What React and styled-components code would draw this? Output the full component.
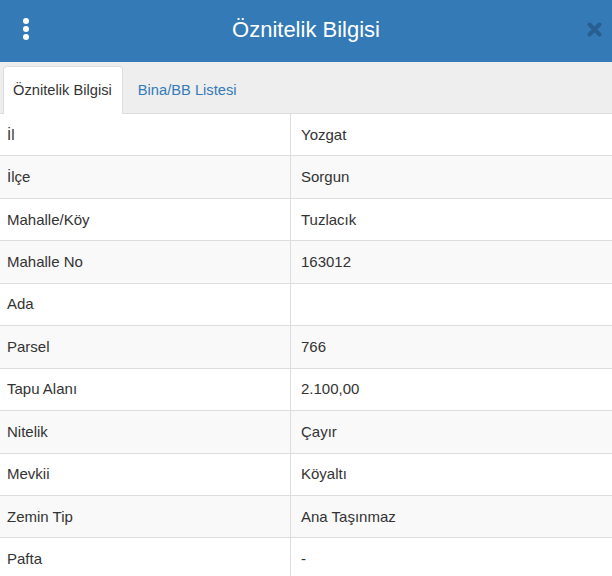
import React from 'react';
import styled, { createGlobalStyle } from 'styled-components';

const GlobalStyle = createGlobalStyle`
    body {
        margin: 0;
        background: #fff;
        font-family: "Liberation Sans", Arial, sans-serif;
        color: #333;
    }
`

const Panel = styled.div`
    width: 612px;
    height: 576px;
    overflow: hidden;
`

const Header = styled.div`
    position: relative;
    height: 62px;
    background-color: #337ab7;
    display: flex;
    align-items: center;
    justify-content: center;
`

const Title = styled.h1`
    margin: 0;
    font-size: 22px;
    font-weight: normal;
    color: #fff;
    line-height: 1;
    margin-top: -3px;
`

const MenuBtn = styled.div`
    position: absolute;
    left: 23px;
    top: 18px;
    display: flex;
    flex-direction: column;
    gap: 2px;
    & span {
        width: 6px;
        height: 6px;
        border-radius: 50%;
        background: #fff;
    }
`

const CloseBtn = styled.div`
    position: absolute;
    right: 10px;
    top: 22px;
    width: 15px;
    height: 15px;
`

const TabBar = styled.div`
    height: 52px;
    box-sizing: border-box;
    background-color: #eee;
    border-bottom: 1px solid #ddd;
    padding: 4px 0 0 3px;
    display: flex;
    align-items: flex-end;
    gap: 2px;
`

const Tab = styled.div`
    box-sizing: border-box;
    padding: ${p => p.active ? '0 10px 2px 9px' : '0 11px 2px 12px'};
    display: flex;
    align-items: center;
    font-size: 14.7px;
    margin-bottom: -1px;
    border-radius: 4px 4px 0 0;
    border: 1px solid ${p => p.active ? '#ddd' : 'transparent'};
    border-bottom: none;
    background: ${p => p.active ? '#fff' : 'transparent'};
    color: ${p => p.active ? '#333' : '#337ab7'};
    height: ${p => p.active ? '48px' : '47px'};
`

const Row = styled.div`
    display: grid;
    grid-template-columns: 290px 1fr;
    height: 42.44px;
    box-sizing: border-box;
    border-bottom: 1px solid #ddd;
    background: ${p => p.striped ? '#f9f9f9' : '#fff'};
    font-size: 15px;
`

const Cell = styled.div`
    display: flex;
    align-items: center;
    padding: 0 7px 1px;
    & + & {
        border-left: 1px solid #ddd;
        padding-left: 10px;
    }
`

const rows = [
    ['İl', 'Yozgat'],
    ['İlçe', 'Sorgun'],
    ['Mahalle/Köy', 'Tuzlacık'],
    ['Mahalle No', '163012'],
    ['Ada', ''],
    ['Parsel', '766'],
    ['Tapu Alanı', '2.100,00'],
    ['Nitelik', 'Çayır'],
    ['Mevkii', 'Köyaltı'],
    ['Zemin Tip', 'Ana Taşınmaz'],
    ['Pafta', '-'],
]

export default function App() {
    return (
        <Panel>
            <GlobalStyle />
            <Header>
                <MenuBtn><span /><span /><span /></MenuBtn>
                <Title>Öznitelik Bilgisi</Title>
                <CloseBtn>
                    <svg width="15" height="15" viewBox="0 0 15 15">
                        <path d="M2.5 2.5 L12.5 12.5 M12.5 2.5 L2.5 12.5" stroke="#285f90" strokeWidth="4" strokeLinecap="round" />
                    </svg>
                </CloseBtn>
            </Header>
            <TabBar>
                <Tab active>Öznitelik Bilgisi</Tab>
                <Tab>Bina/BB Listesi</Tab>
            </TabBar>
            {rows.map(([k, v], i) => (
                <Row key={k} striped={i % 2 === 1}>
                    <Cell>{k}</Cell>
                    <Cell>{v}</Cell>
                </Row>
            ))}
        </Panel>
    )
}
